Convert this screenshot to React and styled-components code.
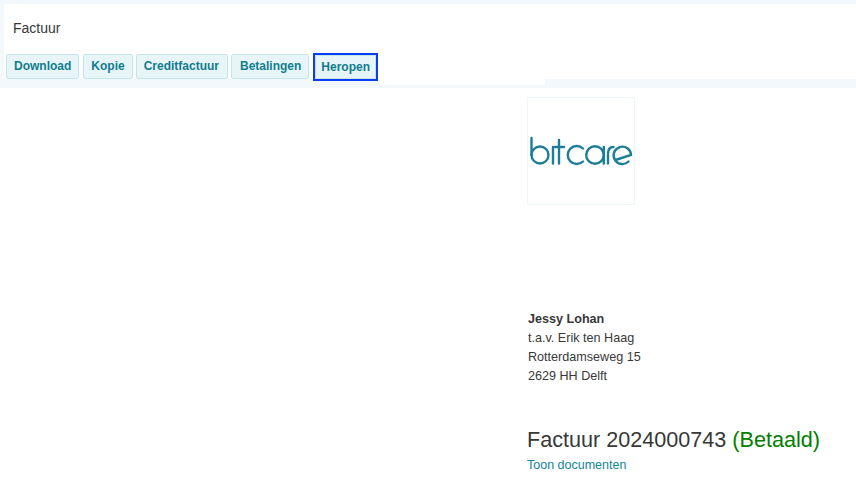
import React from 'react';
import styled, { createGlobalStyle } from 'styled-components';

const GlobalStyle = createGlobalStyle`
  html, body {
    margin: 0;
    padding: 0;
    background: #fff;
  }
  body {
    font-family: 'Liberation Sans', Arial, sans-serif;
    color: #383838;
  }
`;

const Page = styled.div`
  width: 856px;
  height: 488px;
  overflow: hidden;
`;

const Header = styled.header`
  height: 88px;
  box-sizing: border-box;
  padding: 4px 0 0 4px;
  background: #f2f8fb;
`;

const TitleBar = styled.div`
  height: 50px;
  box-sizing: border-box;
  padding: 15px 0 0 9px;
  background: #fff;
  font-size: 14px;
  line-height: 18px;
`;

const ActionRow = styled.div`
  display: flex;
  align-items: flex-start;
`;

const ButtonGroup = styled.div`
  width: 376px;
  height: 25px;
  box-sizing: border-box;
  padding-left: 2px;
  display: flex;
  align-items: flex-start;
  gap: 4px;
  background: #fff;
`;

const Filler = styled.div`
  height: ${({ $height }) => $height}px;
  flex: ${({ $grow }) => ($grow ? 1 : '0 0 165px')};
  background: #fff;
`;

const ActionButton = styled.button`
  height: 25px;
  box-sizing: border-box;
  margin: 0 0 0 ${({ $shift }) => $shift || 0}px;
  padding: 0 ${({ $right }) => $right || 7}px 0 ${({ $left }) => $left || 7}px;
  border: 1px solid #c3e6ec;
  border-radius: 2px;
  background: #e7f5f8;
  color: #107d8e;
  font-family: inherit;
  font-size: 12px;
  font-weight: 700;
  line-height: 23px;
`;

const FocusedButton = styled(ActionButton)`
  position: relative;
  z-index: 1;
  height: 24px;
  margin-top: 1px;
  border-radius: 0;
  outline: 2px solid #0a3cf0;
`;

const Content = styled.main`
  padding: 9px 0 0 527px;
`;

const LogoBox = styled.div`
  width: 108px;
  height: 108px;
  box-sizing: border-box;
  display: flex;
  align-items: center;
  justify-content: center;
  border: 1px solid #eef6f9;
`;

const Address = styled.address`
  margin: 105px 0 0 1px;
  font-size: 12.6px;
  font-style: normal;
  line-height: 19px;
`;

const AddressName = styled.strong`
  display: block;
  font-weight: 700;
`;

const AddressLine = styled.span`
  display: block;
`;

const InvoiceTitle = styled.h1`
  margin: 41px 0 0;
  font-size: 21.6px;
  font-weight: 400;
  line-height: 26px;
  white-space: nowrap;
`;

const PaidStatus = styled.span`
  color: #008000;
`;

const DocumentsLink = styled.a`
  display: block;
  margin-top: 4px;
  color: #12849b;
  font-size: 12.5px;
  line-height: 16px;
  text-decoration: none;
`;

const BitcareLogo = () => (
  <svg width="104" height="30" viewBox="0 0 104 30" role="img" aria-label="bitcare">
    <g fill="none" stroke="#1c7d96" strokeWidth="2.4" strokeLinecap="round">
      <path d="M2.500 2v17" />
      <circle cx="11" cy="19" r="8.500" />
      <path d="M24 11v16.500" />
      <path d="M30 4v23.500M26 11h9" />
      <path d="M54 12.500A9 9 0 1 0 54 25.500" />
      <circle cx="66" cy="19" r="8.800" />
      <path d="M74.800 11v16.500" />
      <path d="M79 27.500V18q0-7 5.500-7" />
      <path d="M99.500 25.500A8.700 8.700 0 1 1 102 19L86.500 24" />
    </g>
  </svg>
);

export default function App() {
  return (
    <Page>
      <GlobalStyle />
      <Header>
        <TitleBar>Factuur</TitleBar>
        <ActionRow>
          <ButtonGroup>
            <ActionButton>Download</ActionButton>
            <ActionButton>Kopie</ActionButton>
            <ActionButton $shift={-1} $right={8}>Creditfactuur</ActionButton>
            <ActionButton $shift={-1} $left={8}>Betalingen</ActionButton>
            <FocusedButton $shift={2} $left={5} $right={5}>Heropen</FocusedButton>
          </ButtonGroup>
          <Filler $height={31} />
          <Filler $height={25} $grow />
        </ActionRow>
      </Header>
      <Content>
        <LogoBox>
          <BitcareLogo />
        </LogoBox>
        <Address>
          <AddressName>Jessy Lohan</AddressName>
          <AddressLine>t.a.v. Erik ten Haag</AddressLine>
          <AddressLine>Rotterdamseweg 15</AddressLine>
          <AddressLine>2629 HH Delft</AddressLine>
        </Address>
        <InvoiceTitle>
          Factuur 2024000743 <PaidStatus>(Betaald)</PaidStatus>
        </InvoiceTitle>
        <DocumentsLink href="#">Toon documenten</DocumentsLink>
      </Content>
    </Page>
  );
}
